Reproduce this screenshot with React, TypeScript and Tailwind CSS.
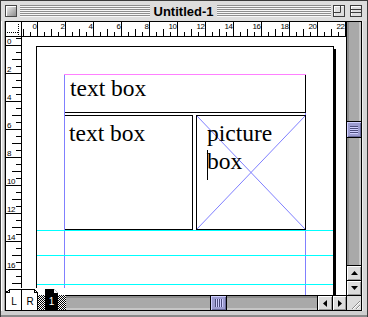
import React from 'react';

/* classic platinum window: QuarkXPress-style document "Untitled-1" */

const SANS = "font-['Liberation_Sans',Arial,sans-serif]";
const SERIF = "font-['Liberation_Serif','Times_New_Roman',serif]";

function Stripes() {
  return (
    <div className="h-[12px] flex-1 bg-[image:repeating-linear-gradient(to_bottom,#8e8e8e_0px,#8e8e8e_1px,#f7f7f7_1px,#f7f7f7_2px)]" />
  );
}

function CloseBox() {
  return (
    <div className="w-[12px] h-[12px] shrink-0 border border-[#454545] bg-linear-to-br from-[#f2f2f2] to-[#8c8c8c] shadow-[inset_1px_1px_0_#ffffff]" />
  );
}

function ZoomBox() {
  return (
    <svg width="12" height="12" className="block shrink-0">
      <rect x="0.5" y="0.5" width="11" height="11" fill="#dedede" stroke="#3c3c3c" />
      <path d="M1 1.5 H10.5 M1.5 1 V10.5" stroke="#ffffff" />
      <path d="M0.5 7.5 H7.5 V0.5" fill="none" stroke="#3c3c3c" />
    </svg>
  );
}

function CollapseBox() {
  return (
    <svg width="12" height="12" className="block shrink-0">
      <rect x="0.5" y="0.5" width="11" height="11" fill="#dedede" stroke="#3c3c3c" />
      <path d="M1 1.5 H10.5 M1.5 1 V10.5" stroke="#ffffff" />
      <path d="M0.5 4.5 H11.5 M0.5 7.5 H11.5" stroke="#3c3c3c" />
    </svg>
  );
}

function TitleBar() {
  return (
    <div className="h-[20px] flex items-center pl-[4px] pr-[5px] bg-[#dddddd]">
      <div className="flex-1 flex items-center gap-[3px]">
        <CloseBox />
        <Stripes />
      </div>
      <span className={`${SANS} px-[4px] text-[13px] font-bold leading-none text-black`}>Untitled-1</span>
      <div className="flex-1 flex items-center">
        <Stripes />
        <div className="ml-[2px]">
          <ZoomBox />
        </div>
        <div className="ml-[5px]">
          <CollapseBox />
        </div>
      </div>
    </div>
  );
}

function CornerBox() {
  return (
    <div className="w-[16px] h-full border-r border-black bg-white">
      <svg width="15" height="14" className="block">
        <line x1="1" y1="10.5" x2="13" y2="10.5" stroke="#000" strokeDasharray="1 1" />
        <line x1="12.5" y1="2" x2="12.5" y2="14" stroke="#000" strokeDasharray="1 1" />
      </svg>
    </div>
  );
}

function TopRuler() {
  const els: React.ReactNode[] = [];
  for (let i = -2; i <= 44; i++) {
    const x = 15 + i * 7;
    if (i % 4 === 0) {
      els.push(<rect key={'t' + i} x={x} y={0} width={1} height={14} fill="#000" />);
      els.push(
        <text key={'l' + i} x={x - 0.5} y={6.5} textAnchor="end" fontSize="8" letterSpacing="-0.5" fill="#000">
          {i / 2}
        </text>
      );
    } else if (i % 2 === 0) {
      els.push(<rect key={'t' + i} x={x} y={7} width={1} height={7} fill="#000" />);
    } else {
      els.push(<rect key={'t' + i} x={x} y={10} width={1} height={4} fill="#000" />);
    }
  }
  return (
    <div className="flex-1 h-full bg-white">
      <svg width="324" height="14" className={`block ${SANS}`} shapeRendering="crispEdges">
        {els}
      </svg>
    </div>
  );
}

function LeftRuler() {
  const els: React.ReactNode[] = [];
  for (let i = -1; i <= 36; i++) {
    const y = 8 + i * 7;
    if (i % 4 === 0) {
      els.push(<rect key={'t' + i} x={0} y={y} width={15} height={1} fill="#000" />);
      els.push(
        <text key={'l' + i} x={1} y={y - 1} fontSize="8" letterSpacing="-0.5" fill="#000">
          {i / 2}
        </text>
      );
    } else if (i % 2 === 0) {
      els.push(<rect key={'t' + i} x={6} y={y} width={9} height={1} fill="#000" />);
    } else {
      els.push(<rect key={'t' + i} x={10} y={y} width={5} height={1} fill="#000" />);
    }
  }
  return (
    <div className="w-[16px] h-full border-r border-black bg-white overflow-hidden">
      <svg width="15" height="251" className={`block ${SANS}`} shapeRendering="crispEdges">
        {els}
      </svg>
    </div>
  );
}

function Canvas() {
  return (
    <div className={`relative flex-1 h-full bg-white ${SERIF} text-black`}>
      {/* page */}
      <div className="absolute left-[14px] top-[9px] w-[298px] h-[249px] border-x border-t border-black" />
      <div className="absolute left-[312px] top-[12px] w-[2px] h-[246px] bg-black" />

      {/* right margin guide, below the boxes */}
      <div className="absolute left-[283px] top-[37px] w-px h-[221px] bg-[#8080ff]" />

      {/* boxes */}
      <div className="absolute left-[42px] top-[37px] w-[242px] h-[39px] border border-black pl-[5px] text-[23.5px] leading-[26px]">
        text box
      </div>
      <div className="absolute left-[42px] top-[78px] w-[129px] h-[115px] border border-black pl-[4px] pt-[3px] text-[23.5px] leading-[28px]">
        text box
      </div>
      <div className="absolute left-[174px] top-[78px] w-[110px] h-[115px] border border-black">
        <svg className="absolute inset-0 w-full h-full" viewBox="0 0 108 113" preserveAspectRatio="none">
          <line x1="0" y1="0" x2="108" y2="113" stroke="#7f7fff" strokeWidth="1" vectorEffect="non-scaling-stroke" />
          <line x1="108" y1="0" x2="0" y2="113" stroke="#7f7fff" strokeWidth="1" vectorEffect="non-scaling-stroke" />
        </svg>
        <div className="relative pl-[10px] pt-[3px] text-[23.5px] leading-[28px]">
          picture
          <br />
          <span className="inline-block w-px h-[30px] bg-black align-[-11px] -mr-px" />
          box
        </div>
      </div>

      {/* guides */}
      <div className="absolute left-[42px] top-[37px] w-px h-[221px] bg-[#8080ff]" />
      <div className="absolute left-[42px] top-[37px] w-[242px] h-px bg-[#ff80ff]" />
      <div className="absolute left-[15px] top-[193px] w-[296px] h-px bg-[#00ffff]" />
      <div className="absolute left-[15px] top-[218px] w-[296px] h-px bg-[#00ffff]" />
      <div className="absolute left-[15px] top-[247px] w-[296px] h-px bg-[#00ffff]" />
    </div>
  );
}

function Checker({ w }: { w: string }) {
  return (
    <div className={`${w} h-full flex flex-col`}>
      <div className="h-[7px]" />
      <div className="flex-1 bg-[image:repeating-conic-gradient(#000_0%_25%,#fff_0%_50%)] bg-[length:2px_2px]" />
    </div>
  );
}

function PageTabs() {
  return (
    <div className={`relative z-10 flex w-[60px] h-full bg-white ${SANS}`}>
      <div className="relative w-[16px] h-full flex items-end justify-center pb-[3px]">
        <svg className="absolute inset-0" width="16" height="22" shapeRendering="crispEdges">
          <path d="M0 4.5 L3.5 1.5 H15.5 V22" fill="#fff" stroke="#000" />
          <path d="M3.5 1.5 V4.5 H0" fill="none" stroke="#000" />
        </svg>
        <span className="relative text-[10px] leading-none">L</span>
      </div>
      <div className="relative w-[16px] h-full flex items-end justify-center pb-[3px]">
        <svg className="absolute inset-0" width="16" height="22" shapeRendering="crispEdges">
          <path d="M0 1.5 H12.5 L15.5 4.5 V22" fill="#fff" stroke="#000" />
          <path d="M12.5 1.5 V4.5 H15.5" fill="none" stroke="#000" />
        </svg>
        <span className="relative text-[10px] leading-none">R</span>
      </div>
      <Checker w="w-[7px]" />
      <div className="relative w-[13px] h-full flex items-end justify-center pb-[3px]">
        <svg className="absolute inset-0" width="13" height="22">
          <path d="M0 1 H9 L13 5 V22 H0 Z" fill="#000" />
          <path d="M9 1 V5 H13 Z" fill="#fff" />
        </svg>
        <span className="relative text-[10px] leading-none text-white">1</span>
      </div>
      <Checker w="w-[8px]" />
    </div>
  );
}

function Tri({ dir }: { dir: 'up' | 'down' | 'left' | 'right' }) {
  const d = {
    up: 'M0 4 L3.5 0 L7 4 Z',
    down: 'M0 0 L7 0 L3.5 4 Z',
    left: 'M4 0 L4 7 L0 3.5 Z',
    right: 'M0 0 L4 3.5 L0 7 Z',
  }[dir];
  const horiz = dir === 'left' || dir === 'right';
  return (
    <svg width={horiz ? 4 : 7} height={horiz ? 7 : 4} className="block">
      <path d={d} fill="#000" />
    </svg>
  );
}

function ArrowBox({ dir, className }: { dir: 'up' | 'down' | 'left' | 'right'; className: string }) {
  return (
    <div
      className={`${className} flex items-center justify-center bg-[#dcdcdc] shadow-[inset_1px_1px_0_#ffffff,inset_-1px_-1px_0_#9a9a9a]`}
    >
      <Tri dir={dir} />
    </div>
  );
}

function VScroll() {
  return (
    <div className="w-[15px] h-full border-l border-black flex flex-col">
      <div className="flex-1 pt-[99px] bg-[#a9a9a9] shadow-[inset_2px_0_0_#8c8c8c,inset_-2px_0_0_#c6c6c6]">
        <div className="h-[17px] border-y border-black bg-[#9c9cd0] shadow-[inset_1px_1px_0_#cfcfff,inset_-1px_-1px_0_#6a6a9c] flex items-center justify-center">
          <svg width="8" height="8" className="block" shapeRendering="crispEdges">
            {[0, 2, 4, 6].map((y) => (
              <React.Fragment key={y}>
                <rect x="0" y={y} width="8" height="1" fill="#4c4c7c" />
                <rect x="0" y={y + 1} width="8" height="1" fill="#cfcfff" />
              </React.Fragment>
            ))}
          </svg>
        </div>
      </div>
      <ArrowBox dir="up" className="h-[15px] border-t border-black" />
      <ArrowBox dir="down" className="h-[15px] border-t border-black" />
      <div className="h-[15px] border-t border-black bg-[#dcdcdc] flex items-end justify-end">
        <svg width="14" height="14" className="block" shapeRendering="crispEdges">
          <path d="M5 13 L13 5 M9 13 L13 9" stroke="#8a8a8a" />
          <path d="M6 13 L13 6 M10 13 L13 10" stroke="#ffffff" />
        </svg>
      </div>
    </div>
  );
}

function HScroll() {
  return (
    <div className="h-[15px] border-t border-black flex">
      <div className="flex-1 pl-[144px] bg-[#a9a9a9] shadow-[inset_0_2px_0_#8c8c8c,inset_0_-2px_0_#c6c6c6]">
        <div className="w-[17px] h-full border-x border-black bg-[#9c9cd0] shadow-[inset_1px_1px_0_#cfcfff,inset_-1px_-1px_0_#6a6a9c] flex items-center justify-center">
          <svg width="8" height="8" className="block" shapeRendering="crispEdges">
            {[0, 2, 4, 6].map((x) => (
              <React.Fragment key={x}>
                <rect x={x} y="0" width="1" height="8" fill="#4c4c7c" />
                <rect x={x + 1} y="0" width="1" height="8" fill="#cfcfff" />
              </React.Fragment>
            ))}
          </svg>
        </div>
      </div>
      <ArrowBox dir="left" className="w-[15px] h-full border-l border-black" />
      <ArrowBox dir="right" className="w-[14px] h-full border-l border-black" />
    </div>
  );
}

export default function App() {
  return (
    <div className="w-[368px] h-[317px] overflow-hidden border-x border-t border-[#3a3a3a] bg-[#dddddd] flex flex-col">
      <TitleBar />

      <div className="flex h-[290px]">
        <div className="w-[4px] h-full bg-[#dddddd] shadow-[inset_1px_0_0_#ffffff,inset_-1px_0_0_#a2a2a2]" />

        <div className="w-[357px] h-full border border-black flex">
          <div className="w-[340px] h-full flex flex-col bg-white">
            {/* rulers */}
            <div className="h-[15px] flex border-b border-black">
              <CornerBox />
              <TopRuler />
            </div>

            {/* page area */}
            <div className="h-[251px] flex">
              <LeftRuler />
              <Canvas />
            </div>

            {/* page tabs + horizontal scroll */}
            <div className="h-[22px] flex">
              <PageTabs />
              <div className="flex-1 flex flex-col">
                <div className="h-[7px] bg-white" />
                <HScroll />
              </div>
            </div>
          </div>

          <VScroll />
        </div>

        <div className="flex-1 h-full bg-[#d6d6d6] shadow-[inset_1px_0_0_#f0f0f0]" />
      </div>

      <div className="flex-1 bg-[#cfcfcf] shadow-[inset_0_-2px_0_#8a8a8a]" />
    </div>
  );
}
